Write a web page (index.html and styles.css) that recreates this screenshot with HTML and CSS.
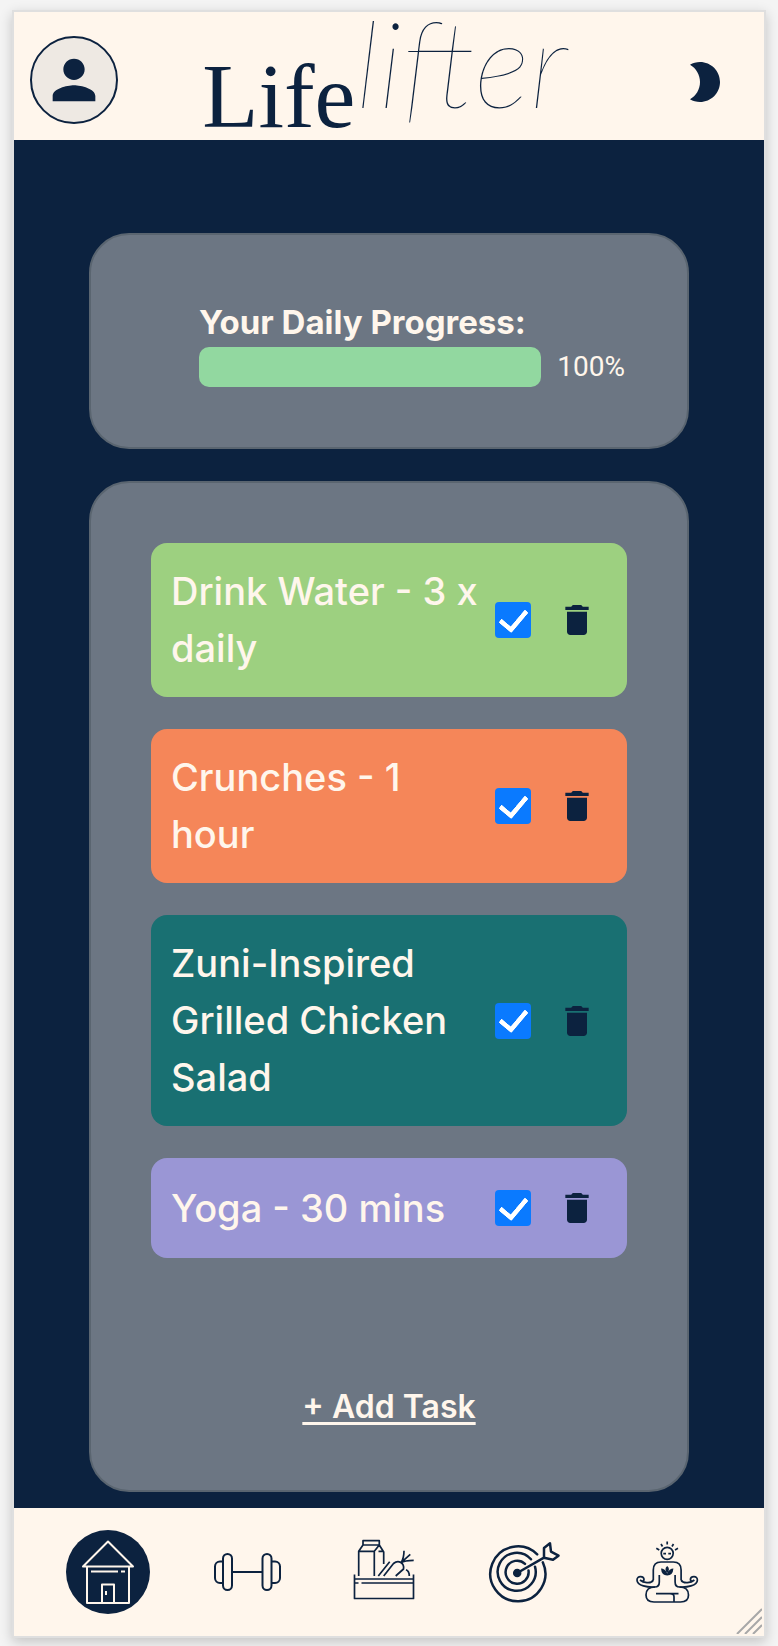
FILE: index.html
```html
<!DOCTYPE html>
<html lang="en">
<head>
<meta charset="utf-8">
<meta name="viewport" content="width=device-width, initial-scale=1">
<title>Life Lifter</title>
<link rel="stylesheet" href="styles.css">
</head>
<body>
<svg class="symbols" aria-hidden="true">
  <symbol id="trash" viewBox="0 0 24 24"><path d="M6 19c0 1.100.9 2 2 2h8c1.100 0 2-.9 2-2V7H6v12zM19 4h-3.500l-1-1h-5l-1 1H5v2h14V4z"/></symbol>
</svg>
<div class="app">
  <header class="header">
    <button class="avatar" aria-label="Profile">
      <svg viewBox="0 0 24 24"><path d="M12 12c2.210 0 4-1.790 4-4s-1.790-4-4-4-4 1.790-4 4 1.790 4 4 4zm0 2c-2.670 0-8 1.340-8 4v2h16v-2c0-2.660-5.330-4-8-4z"/></svg>
    </button>
    <h1 class="logo"><span class="logo-life">Life</span><span class="logo-lifter">lifter</span></h1>
    <button class="theme" aria-label="Dark mode">
      <svg viewBox="0 0 24 24"><path d="M10 2c-1.820 0-3.530.5-5 1.350C7.990 5.080 10 8.300 10 12s-2.010 6.920-5 8.650C6.470 21.500 8.180 22 10 22c5.520 0 10-4.480 10-10S15.520 2 10 2z"/></svg>
    </button>
  </header>

  <main class="main">
    <section class="card progress-card">
      <h2 class="progress-title" id="progress-title">Your Daily Progress:</h2>
      <div class="progress-row">
        <div class="bar" role="progressbar" aria-labelledby="progress-title" aria-valuenow="100" aria-valuemin="0" aria-valuemax="100"><div class="bar-fill" style="width:100%"></div></div>
        <span class="percent">100%</span>
      </div>
    </section>

    <section class="card tasks-card">
      <ul class="tasks">
        <li class="task task-water">
          <label class="task-name" for="t1">Drink Water - 3 x daily</label>
          <input class="check" id="t1" type="checkbox" checked>
          <button class="delete" aria-label="Delete Drink Water"><svg><use href="#trash"/></svg></button>
        </li>
        <li class="task task-exercise">
          <label class="task-name" for="t2">Crunches - 1 hour</label>
          <input class="check" id="t2" type="checkbox" checked>
          <button class="delete" aria-label="Delete Crunches"><svg><use href="#trash"/></svg></button>
        </li>
        <li class="task task-meal">
          <label class="task-name" for="t3">Zuni-Inspired Grilled Chicken Salad</label>
          <input class="check" id="t3" type="checkbox" checked>
          <button class="delete" aria-label="Delete Salad"><svg><use href="#trash"/></svg></button>
        </li>
        <li class="task task-mind">
          <label class="task-name" for="t4">Yoga - 30 mins</label>
          <input class="check" id="t4" type="checkbox" checked>
          <button class="delete" aria-label="Delete Yoga"><svg><use href="#trash"/></svg></button>
        </li>
      </ul>
      <button class="add">+ Add Task</button>
    </section>
  </main>

  <nav class="nav" aria-label="Main">
    <a class="nav-item nav-active" href="#" aria-label="Home">
      <svg viewBox="0 0 84 84"><path d="M42 11.500 17 36.500h50zM21 37v36H63V37M36 73V54.500h12V73M40 61v4M25 41.500h27M55 41.500h4"/></svg>
    </a>
    <a class="nav-item" href="#" aria-label="Exercise">
      <svg viewBox="0 0 84 84"><rect x="16" y="24" width="9" height="36" rx="4.500"/><rect x="55.500" y="24" width="9" height="36" rx="4.500"/><path d="M16 31.500h-3a5 5 0 0 0-5 5v11.500a5 5 0 0 0 5 5h3M65 31.500h3a5 5 0 0 1 5 5V48a5 5 0 0 1-5 5h-3M25 42h30"/></svg>
    </a>
    <a class="nav-item" href="#" aria-label="Meals">
      <svg class="fine" viewBox="0 0 84 84"><path d="M7.500 44.500v24h59v-24M7.500 49h59M7.500 53h4M14.500 53h52M11.700 46V21.300L16 15h16.300l4.400 7V34M11.700 21.300h15.600V46M27.300 21.300 32.300 15M16 15v-4.300h16.300V15M31.500 21.300h5M31.300 46l11.400-14.300M36.700 46 46.500 33.500c5-4 11-.5 10 5.500L48.700 46M54 32.700c2-3 3-7 3-12M54 32.700l9.300-8.400M54 32.700c3-2 7-2.400 12.700-2.400M59 39.700c2.500 1 3.300 3 3.300 6.300"/></svg>
    </a>
    <a class="nav-item" href="#" aria-label="Goals">
      <svg class="bold" viewBox="0 0 84 84"><path d="M49.200 24.300A27.500 27.500 0 1 0 54.800 32.300M43 29.300A19 19 0 1 0 47 36.700M37 33.800A11.500 11.500 0 1 0 40.500 40.500M29.200 43 56 27.700M56 27.700V18l6-4.700 1 8.400 7.500 4-5.500 4z"/><circle class="solid" cx="29.200" cy="43" r="3"/></svg>
    </a>
    <a class="nav-item" href="#" aria-label="Mindfulness">
      <svg class="fine" viewBox="0 0 84 84">
        <circle cx="39.200" cy="23.300" r="6"/>
        <path d="M39.200 11.500v3M33 14l1.500 2.500M45.500 14 44 16.500M28.300 18.300l3 1.700M50 18.300 47 20M35.300 23.700H38M40.300 23.700H43"/>
        <path d="M25.300 50V40q0-8 7.700-8h12.400q7.700 0 7.700 8v10"/>
        <path d="M31.300 45v7q0 5-4.500 5C20 57.500 9 56 9 50c0-5 7-4 7-.5 0 1-1 2-2.500 1.500M12 50c3 2.500 11 4.500 13.300 0"/>
        <path d="M47.100 45v7q0 5 4.500 5c6.800.5 17.800-1 17.800-7 0-5-7-4-7-.5 0 1 1 2 2.500 1.500M66.400 50c-3 2.500-11 4.500-13.300 0"/>
        <path d="M27 57c-6 0-9 3-9 8q0 7 8 7h26.500q8 0 8-7c0-5-3-8-9-8M28 63.700h22.500M42 63.700q4 0 4 3V72"/>
        <path class="lotus" d="M39.200 36q3.500 3 0 7-3.500-4 0-7M33 38.500q4 0 6.200 5 2.200-5 6.200-5-.5 7-6.200 7t-6.200-7"/>
      </svg>
    </a>
  </nav>
  <svg class="grip" viewBox="0 0 26 26" aria-hidden="true"><path d="M1 26 26 1M9 26 26 9M17 26l9-9"/></svg>
</div>
</body>
</html>
```
FILE: styles.css
```css
* { box-sizing: border-box; }
body { margin: 0; padding: 10px 12px 8px; background: #f4f4f4; color: #fff6ec; font-family: Inter, sans-serif; }
button { border: 0; padding: 0; background: none; font: inherit; color: inherit; }
.symbols { position: absolute; width: 0; height: 0; }
.app { position: relative; border: 2px solid #dfdfdf; background: #0c223f; box-shadow: 0 4px 12px rgba(0,0,0,.2); }
.header { display: flex; align-items: flex-end; justify-content: space-between; height: 128px; padding: 0 24px 0 16px; background: #fff6ec; color: #0c223f; }
.avatar { display: grid; place-items: center; width: 88px; height: 88px; margin-bottom: 16px; border: 2px solid #0c223f; border-radius: 50%; background: #eee9e3; }
.avatar svg { width: 64px; fill: #0c223f; }
.theme { margin-bottom: 22px; padding: 12px; }
.theme svg { display: block; width: 48px; fill: #0c223f; }
.logo { display: flex; align-items: flex-end; margin: 0 16px 0 0; }
.logo-life { font: 400 92px/88px "Liberation Serif", serif; }
.logo-lifter { padding-bottom: 28px; font: italic 100 120px/100px Lato, sans-serif; }
.main { display: flex; flex-direction: column; align-items: center; gap: 32px; padding: 93px 10% 16px; }
.card { width: 100%; border: 2px solid #5a6570; border-radius: 40px; background: #6c7683; }
.progress-card { padding: 62px 62px 60px 108px; }
.progress-title { margin: 0; font-size: 33px; font-weight: 700; line-height: 50px; }
.progress-row { display: flex; align-items: center; gap: 16px; }
.bar { flex: 1; height: 40px; border-radius: 10px; overflow: hidden; background: #ddd; }
.bar-fill { height: 100%; background: #92d8a0; }
.percent { font: 400 28px/32px Roboto, sans-serif; }
.tasks-card { display: flex; flex-direction: column; gap: 124px; padding: 60px; }
.tasks { display: flex; flex-direction: column; gap: 32px; margin: 0; padding: 0; list-style: none; }
.task { display: flex; align-items: center; min-height: 100px; padding: 20px 30px 20px 20px; border-radius: 16px; }
.task-water { background: #9dd080; }
.task-exercise { background: #f58659; }
.task-meal { background: #197072; }
.task-mind { background: #9a96d5; }
.task-name { flex: 1; font-size: 38px; font-weight: 500; line-height: 57px; }
.check { display: grid; place-items: center; width: 36px; height: 36px; margin: 0 26px 0 4px; border-radius: 4px; appearance: none; background: #fff; }
.check:checked { background: #0a7aff; }
.check:checked::before { content: ""; width: 12px; height: 22px; margin-bottom: 6px; border: solid #fff; border-width: 0 5px 5px 0; border-radius: 2px; transform: rotate(40deg); }
.delete svg { display: block; width: 40px; height: 40px; fill: #0c223f; }
.add { align-self: center; font-size: 32px; font-weight: 600; line-height: 50px; text-decoration: underline; text-decoration-thickness: 3px; text-decoration-skip-ink: none; text-underline-offset: 4px; }
.nav { display: flex; align-items: center; justify-content: space-between; height: 128px; padding: 0 52px; background: #fff6ec; }
.tasks-card { padding-bottom: 58px; }
.nav-item { width: 84px; height: 84px; border-radius: 50%; }
.nav-item svg { display: block; fill: none; stroke: #0c223f; stroke-width: 2; stroke-linejoin: round; }
.nav-item .bold { stroke-width: 2.500; stroke-linecap: round; }
.nav-item .fine { stroke-width: 1.700; }
.nav-item .solid { fill: #0c223f; }
.nav-item .lotus { fill: #0c223f; stroke: none; }
.nav-active { background: #0c223f; }
.nav-active svg { stroke: #fff6ec; }
.grip { position: absolute; right: 2px; bottom: 2px; width: 26px; fill: none; stroke: #a8a8a8; stroke-width: 2; }
```
